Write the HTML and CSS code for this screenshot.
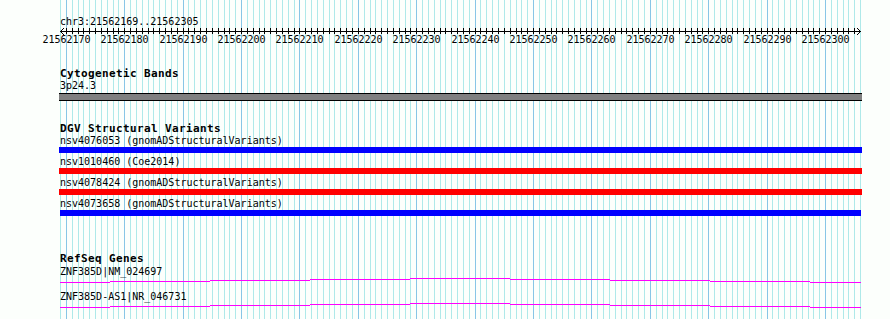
FILE: index.html
```html
<!DOCTYPE html>
<html lang="en">
<head>
  <meta charset="UTF-8">
  <title>Genome Browser - chr3:21562169..21562305</title>
  <link rel="stylesheet" href="styles.css">
</head>
<body>
  <div class="browser">
    <svg class="grid" id="grid" width="890" height="319"></svg>

    <div class="content">
      <div class="locus">chr3:21562169..21562305</div>
      <svg class="ruler" id="ruler" width="890" height="18"></svg>

      <div class="track cyto">
        <div class="track-title">Cytogenetic Bands</div>
        <div class="feature-label">3p24.3</div>
        <div class="band"></div>
      </div>

      <div class="track dgv">
        <div class="track-title">DGV Structural Variants</div>
        <div class="feature">
          <div class="feature-label">nsv4076053 (gnomADStructuralVariants)</div>
          <div class="sv-bar blue"></div>
        </div>
        <div class="feature">
          <div class="feature-label">nsv1010460 (Coe2014)</div>
          <div class="sv-bar red"></div>
        </div>
        <div class="feature">
          <div class="feature-label">nsv4078424 (gnomADStructuralVariants)</div>
          <div class="sv-bar red"></div>
        </div>
        <div class="feature">
          <div class="feature-label">nsv4073658 (gnomADStructuralVariants)</div>
          <div class="sv-bar blue short"></div>
        </div>
      </div>

      <div class="track refseq">
        <div class="track-title">RefSeq Genes</div>
        <div class="gene">
          <div class="feature-label">ZNF385D|NM_024697</div>
          <svg class="gene-line" width="801" height="6">
            <path d="M0 4.5H50M50 3.5H150M150 2.5H250M250 1.5H350M350 0.5H450M450 1.5H550M550 2.5H650M650 3.5H750M750 4.5H801"/>
          </svg>
        </div>
        <div class="gene">
          <div class="feature-label">ZNF385D-AS1|NR_046731</div>
          <svg class="gene-line" width="801" height="6">
            <path d="M0 4.5H50M50 3.5H150M150 2.5H250M250 1.5H350M350 0.5H450M450 1.5H550M550 2.5H650M650 3.5H750M750 4.5H801"/>
          </svg>
        </div>
      </div>
    </div>
  </div>

  <script>
    const svgNS = 'http://www.w3.org/2000/svg';
    const start = 21562169;
    const end = 21562305;
    const left = 60.5;
    const scale = 5.84; // pixels per base

function xAt(k) {
  return Math.floor(left + k * scale) + 0.5;
}

function make(tag, attrs) {
  const el = document.createElementNS(svgNS, tag);
  for (const name in attrs) el.setAttribute(name, attrs[name]);
  return el;
}

// grid lines, one per base, darker every 10
const grid = document.getElementById('grid');
for (let k = 0; k <= end - start + 1; k++) {
  const major = (start + k) % 10 === 0;
  grid.appendChild(make('line', {
    x1: xAt(k), x2: xAt(k), y1: 0, y2: 319,
    class: major ? 'major' : 'minor'
  }));
}

// ruler: axis, arrows, ticks and labels
const ruler = document.getElementById('ruler');
ruler.appendChild(make('line', { x1: 60, x2: 861, y1: 3.5, y2: 3.5, class: 'axis' }));
ruler.appendChild(make('polyline', { points: '64,0 60.5,3.5 64,7', class: 'axis' }));
ruler.appendChild(make('polyline', { points: '857,0 860.5,3.5 857,7', class: 'axis' }));
for (let k = 1; k <= end - start; k++) {
  ruler.appendChild(make('line', { x1: xAt(k), x2: xAt(k), y1: 0, y2: 6, class: 'axis' }));
  if ((start + k) % 10 === 0) {
    const label = make('text', { x: xAt(k), y: 15, class: 'tick-label' });
    label.textContent = start + k;
    ruler.appendChild(label);
  }
}
  </script>
</body>
</html>
```

FILE: styles.css
```css
body {
  margin: 0;
  background-color: #fcfffc;
  font-family: "DejaVu Sans Mono", "Liberation Mono", monospace;
  font-size: 10px;
  line-height: 12px;
  color: #000;
}

.browser {
  position: relative;
  width: 890px;
  height: 319px;
  overflow: hidden;
}

.grid {
  position: absolute;
  left: 0;
  top: 0;
}

.grid .minor {
  stroke: #aee9e9;
  stroke-width: 1;
}

.grid .major {
  stroke: #88c6e6;
  stroke-width: 1;
}

.content {
  position: relative;
  padding-left: 60px;
  padding-top: 16px;
}

.locus {
  height: 12px;
}

.ruler {
  display: block;
  margin-left: -60px;
}

.ruler .axis {
  stroke: #000;
  stroke-width: 1;
  fill: none;
}

.tick-label {
  font-family: "DejaVu Sans Mono", "Liberation Mono", monospace;
  font-size: 10px;
  text-anchor: middle;
  fill: #000;
}

.track {
  width: 801px;
}

.track-title {
  font-size: 11px;
  font-weight: bold;
  letter-spacing: 0.38px;
  height: 12px;
}

.feature-label {
  height: 12px;
  white-space: nowrap;
}

/* cytogenetic band */
.cyto {
  margin-top: 22px;
}

.band {
  margin-top: 1px;
  margin-left: -1px;
  width: 803px;
  height: 6px;
  background-color: #808080;
  border-top: 1px solid #000;
  border-bottom: 1px solid #000;
}

/* structural variants */
.dgv {
  margin-top: 22px;
}

.feature {
  height: 21px;
}

.sv-bar {
  margin-left: -1px;
  width: 803px;
  height: 6px;
}

.sv-bar.short {
  margin-left: 0;
  width: 801px;
}

.blue {
  background-color: #0000ff;
}

.red {
  background-color: #ff0000;
}

/* genes */
.refseq {
  margin-top: 34px;
}

.refseq .track-title {
  margin-bottom: 1px;
}

.gene {
  height: 25px;
}

.gene-line {
  display: block;
}

.gene-line path {
  stroke: #ff00ff;
  stroke-width: 1;
  fill: none;
}
```
